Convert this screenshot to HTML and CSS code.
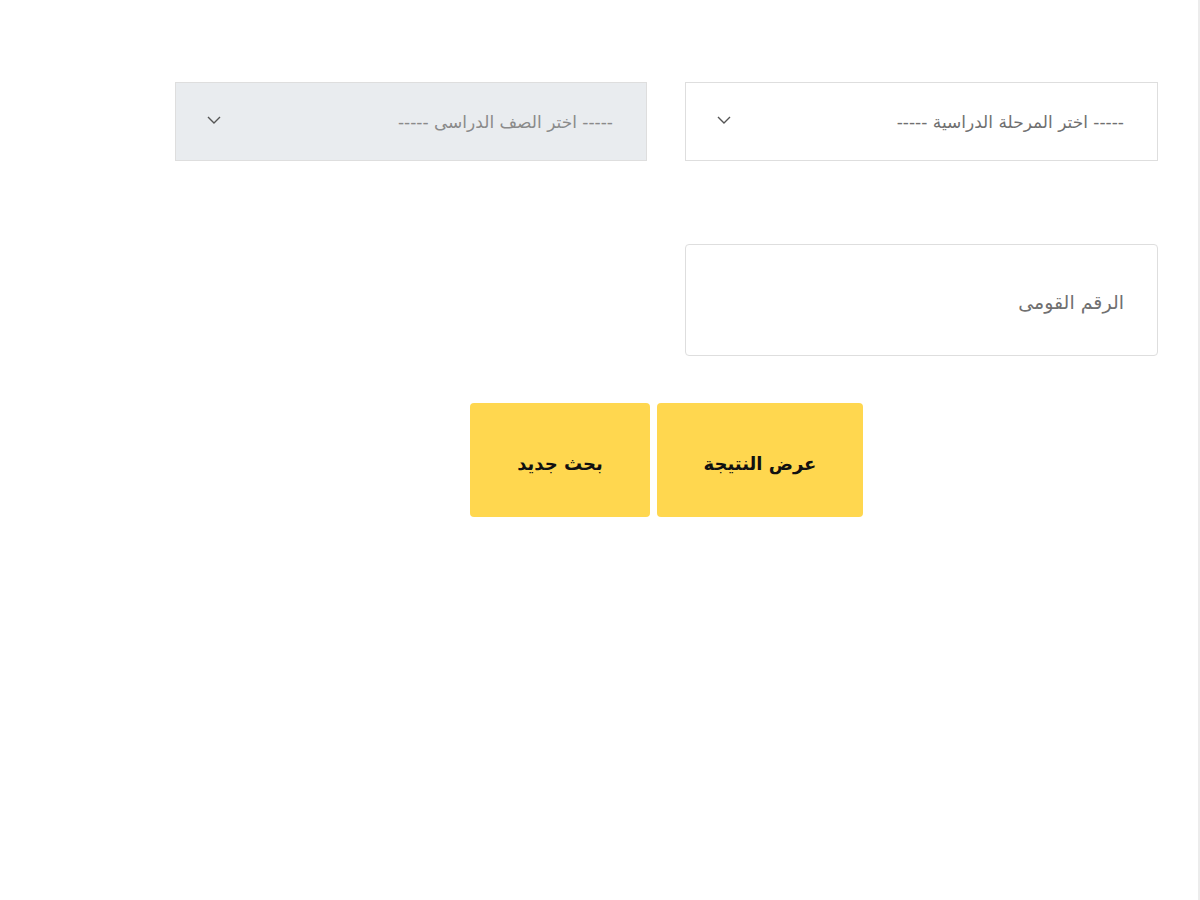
FILE: index.html
```html
<!DOCTYPE html>
<html lang="ar" dir="rtl">
<head>
<meta charset="utf-8">
<title>نتيجة</title>
<link rel="stylesheet" href="styles.css">
</head>
<body>
<div class="page">
  <form class="form">
    <div class="row">
      <div class="field select">
        <span class="label">----- اختر المرحلة الدراسية -----</span>
        <svg class="chev" viewBox="0 0 14 8" width="14" height="8"><path d="M1 1 L7 7 L13 1" fill="none" stroke="#555" stroke-width="1.4"/></svg>
      </div>
      <div class="field select disabled">
        <span class="label">----- اختر الصف الدراسى -----</span>
        <svg class="chev" viewBox="0 0 14 8" width="14" height="8"><path d="M1 1 L7 7 L13 1" fill="none" stroke="#555" stroke-width="1.4"/></svg>
      </div>
    </div>
    <div class="row">
      <div class="field input">
        <span class="label">الرقم القومى</span>
      </div>
    </div>
    <div class="actions">
      <button type="button" class="btn btn-show">عرض النتيجة</button>
      <button type="button" class="btn btn-new">بحث جديد</button>
    </div>
  </form>
</div>
</body>
</html>
```

FILE: styles.css
```css
html, body {
  margin: 0;
  padding: 0;
  background: #fff;
  height: 100%;
}
body {
  font-family: "DejaVu Sans", "Noto Sans", sans-serif;
}
.page {
  min-height: 900px;
  box-sizing: border-box;
  border-right: 2px solid #ececec;
  width: 1198px;
  padding-top: 82px;
  padding-right: 40px;
}
.form {
  width: 983px;
  display: flex;
  flex-direction: column;
}
.row {
  display: flex;
  gap: 38px;
}
.row + .row {
  margin-top: 83px;
}
.field {
  box-sizing: border-box;
  width: 473px;
  border: 1px solid #dedede;
  background: #fff;
  display: flex;
  align-items: center;
  justify-content: space-between;
  padding: 0 33px 0 33px;
  color: #707070;
  font-size: 17px;
}
.field.disabled {
  width: 472px;
}
.select {
  height: 79px;
}
.disabled {
  background: #e9ecef;
  color: #8a8a8a;
}
.chev {
  margin-top: -4px;
  margin-left: -2px;
}
.input {
  height: 112px;
  border-radius: 4px;
}
.input .label {
  font-size: 19px;
  margin-top: 4px;
}
.actions {
  margin-top: 47px;
  display: flex;
  justify-content: center;
  gap: 7px;
}
.btn {
  border: 0;
  border-radius: 4px;
  background: #ffd74f;
  color: #111;
  font-family: "DejaVu Sans", sans-serif;
  font-weight: bold;
  font-size: 18px;
  height: 114px;
  padding: 6px 0 0 0;
}
.btn-show {
  width: 206px;
}
.btn-new {
  width: 180px;
}
```
